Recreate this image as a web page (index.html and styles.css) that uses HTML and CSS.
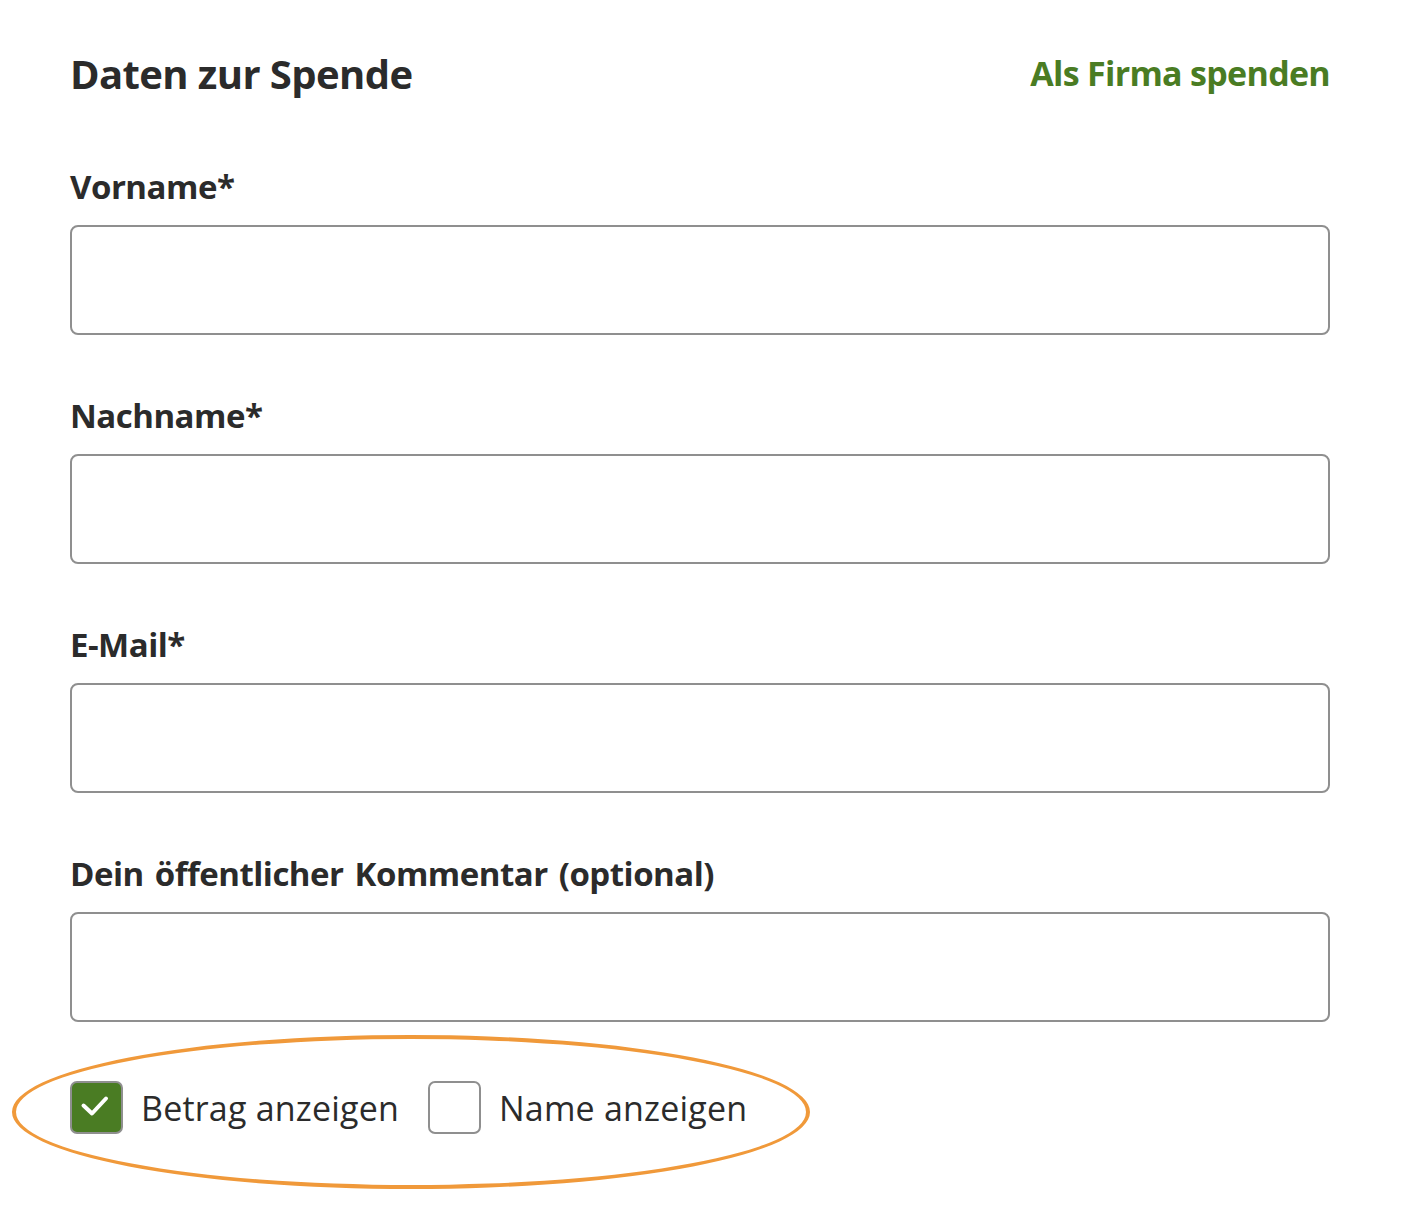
FILE: index.html
```html
<!DOCTYPE html>
<html lang="de">
<head>
<meta charset="utf-8">
<title>Daten zur Spende</title>
<link rel="stylesheet" href="styles.css">
</head>
<body>
<div class="page">
  <form class="form">
    <div class="header">
      <h2 class="title">Daten zur Spende</h2>
      <a class="company-link" href="#">Als Firma spenden</a>
    </div>
    <div class="field">
      <label class="label" for="vorname">Vorname*</label>
      <input class="input" id="vorname" type="text">
    </div>
    <div class="field">
      <label class="label" for="nachname">Nachname*</label>
      <input class="input" id="nachname" type="text">
    </div>
    <div class="field">
      <label class="label" for="email">E-Mail*</label>
      <input class="input" id="email" type="email">
    </div>
    <div class="field">
      <label class="label" for="kommentar">Dein öffentlicher Kommentar (optional)</label>
      <input class="input" id="kommentar" type="text">
    </div>
    <div class="options">
      <label class="option">
        <span class="box box-checked">
          <svg class="check" viewBox="0 0 49 49" width="49" height="49" aria-hidden="true"><path d="M11.5 22.5l8.5 8L34 15.5" fill="none" stroke="#fff" stroke-width="4" stroke-linecap="round" stroke-linejoin="round"/></svg>
        </span>
        <span class="option-text">Betrag anzeigen</span>
      </label>
      <label class="option">
        <span class="box"></span>
        <span class="option-text">Name anzeigen</span>
      </label>
      <span class="highlight"></span>
    </div>
  </form>
</div>
</body>
</html>
```

FILE: styles.css
```css
* { box-sizing: border-box; }
html, body { margin: 0; padding: 0; background: #fff; }
body {
  font-family: "Open Sans", "Noto Sans", sans-serif;
  color: #2b2b2b;
}
.page {
  width: 1412px;
  height: 1216px;
  padding: 50px 82px 0 70px;
}
.form { display: flex; flex-direction: column; }
.header {
  display: flex;
  justify-content: space-between;
  align-items: flex-start;
  height: 48px;
  margin-bottom: 67px;
}
.title {
  margin: 0;
  font-size: 40px;
  line-height: 48px;
  font-weight: 700;
  letter-spacing: -0.6px;
}
.company-link {
  margin-top: -1px;
  font-size: 34px;
  line-height: 48px;
  font-weight: 700;
  color: #4a7c23;
  text-decoration: none;
  letter-spacing: -0.7px;
}
.field { display: flex; flex-direction: column; margin-bottom: 59px; }
.field:last-of-type { margin-bottom: 58px; }
.label {
  font-size: 33px;
  line-height: 40px;
  font-weight: 700;
  letter-spacing: -0.5px;
  word-spacing: 3px;
  margin-top: 2px;
  margin-bottom: 18px;
}
.input {
  width: 1260px;
  height: 110px;
  border: 2px solid #8f8f8f;
  border-radius: 8px;
  background: #fff;
  font: inherit;
  outline: none;
}
.options {
  position: relative;
  display: flex;
  align-items: center;
  gap: 29px;
  height: 53px;
}
.option {
  display: flex;
  align-items: center;
  gap: 18px;
}
.box {
  width: 53px;
  height: 53px;
  border: 2px solid #8f8f8f;
  border-radius: 7px;
  background: #fff;
  display: block;
}
.box-checked { background: #4a7c23; }
.check { display: block; }
.option-text {
  font-size: 34px;
  line-height: 40px;
  font-weight: 400;
  letter-spacing: 0.2px;
}
.highlight {
  position: absolute;
  left: -58px;
  top: -46px;
  width: 798px;
  height: 154px;
  border: 4.5px solid #f0993a;
  border-radius: 50%;
  pointer-events: none;
}
```
